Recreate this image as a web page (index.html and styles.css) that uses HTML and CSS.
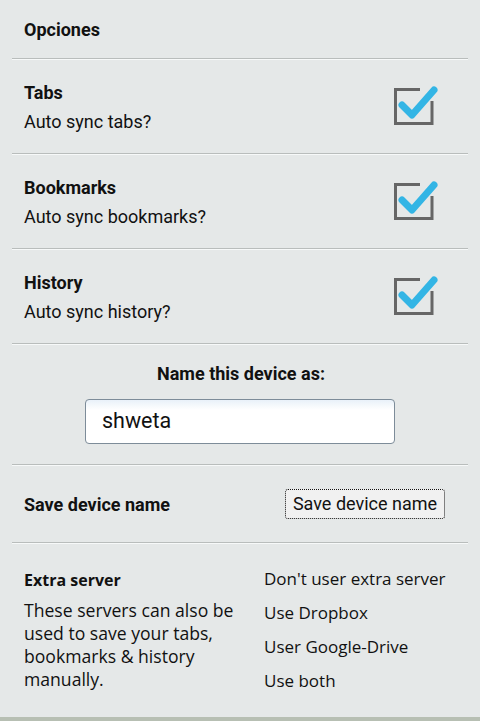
FILE: index.html
```html
<!DOCTYPE html>
<html>
<head>
<meta charset="utf-8">
<link rel="stylesheet" href="styles.css">
</head>
<body>
<div class="page">
  <div class="header">Opciones</div>
  <div class="divider"></div>

  <div class="row">
    <div class="texts">
      <div class="title">Tabs</div>
      <div class="sub">Auto sync tabs?</div>
    </div>
    <svg class="check" width="46" height="42" viewBox="0 0 46 42">
      <path d="M28 4.5 H3.5 V38.5 H40 V16" fill="none" stroke="#666" stroke-width="3"/>
      <path d="M10 20 L20 30 L42 5" fill="none" stroke="#33b5e5" stroke-width="7" stroke-linecap="round" stroke-linejoin="round"/>
    </svg>
  </div>
  <div class="divider"></div>

  <div class="row">
    <div class="texts">
      <div class="title">Bookmarks</div>
      <div class="sub">Auto sync bookmarks?</div>
    </div>
    <svg class="check" width="46" height="42" viewBox="0 0 46 42">
      <path d="M28 4.5 H3.5 V38.5 H40 V16" fill="none" stroke="#666" stroke-width="3"/>
      <path d="M10 20 L20 30 L42 5" fill="none" stroke="#33b5e5" stroke-width="7" stroke-linecap="round" stroke-linejoin="round"/>
    </svg>
  </div>
  <div class="divider"></div>

  <div class="row">
    <div class="texts">
      <div class="title">History</div>
      <div class="sub">Auto sync history?</div>
    </div>
    <svg class="check" width="46" height="42" viewBox="0 0 46 42">
      <path d="M28 4.5 H3.5 V38.5 H40 V16" fill="none" stroke="#666" stroke-width="3"/>
      <path d="M10 20 L20 30 L42 5" fill="none" stroke="#33b5e5" stroke-width="7" stroke-linecap="round" stroke-linejoin="round"/>
    </svg>
  </div>
  <div class="divider"></div>

  <div class="device">
    <div class="device-label">Name this device as:</div>
    <div class="input">shweta</div>
  </div>
  <div class="divider"></div>

  <div class="save-row">
    <div class="save-label">Save device name</div>
    <div class="button">Save device name</div>
  </div>
  <div class="divider"></div>

  <div class="extra">
    <div class="extra-left">
      <div class="extra-title">Extra server</div>
      <div class="extra-desc">These servers can also be used to save your tabs, bookmarks &amp; history manually.</div>
    </div>
    <div class="extra-right">
      <div class="opt">Don't user extra server</div>
      <div class="opt">Use Dropbox</div>
      <div class="opt">User Google-Drive</div>
      <div class="opt">Use both</div>
    </div>
  </div>
  <div class="bottom-band"></div>
</div>
</body>
</html>
```
FILE: styles.css
```css
html, body {
  margin: 0;
  padding: 0;
  background: #e5e8e8;
}
body {
  font-family: Roboto, "Liberation Sans", sans-serif;
  color: #111;
}
.page {
  width: 480px;
  height: 721px;
  display: flex;
  flex-direction: column;
  overflow: hidden;
}
.header {
  height: 58px;
  box-sizing: border-box;
  padding: 18px 0 0 24px;
  font-size: 18px;
  font-weight: bold;
  line-height: 24px;
}
.divider {
  height: 1px;
  margin: 0 12px;
  background: #b9bdbc;
  border-bottom: 1px solid #f7f9f9;
  flex: none;
}
.row {
  height: 93px;
  box-sizing: border-box;
  padding: 21px 0 0 24px;
  display: flex;
  justify-content: space-between;
  align-items: flex-start;
}
.title {
  font-size: 18px;
  font-weight: bold;
  line-height: 24px;
}
.sub {
  font-size: 18px;
  line-height: 24px;
  margin-top: 5px;
}
.check {
  margin-right: 42px;
  margin-top: 4px;
  flex: none;
}
.device {
  height: 119px;
  box-sizing: border-box;
  padding-top: 17px;
  display: flex;
  flex-direction: column;
  align-items: center;
}
.device-label {
  font-size: 18px;
  font-weight: bold;
  line-height: 24px;
  padding-left: 2px;
}
.input {
  margin-top: 13px;
  width: 310px;
  height: 45px;
  box-sizing: border-box;
  border: 1px solid #7d8c99;
  border-radius: 4px;
  background: linear-gradient(#e9f1f9, #ffffff 10px);
  font-size: 21.5px;
  line-height: 41px;
  padding-left: 16px;
  color: #111;
}
.save-row {
  height: 76px;
  box-sizing: border-box;
  padding: 0 35px 0 24px;
  display: flex;
  justify-content: space-between;
  align-items: center;
}
.save-label {
  font-size: 18px;
  font-weight: bold;
  padding-top: 1px;
}
.button {
  width: 160px;
  height: 30px;
  box-sizing: border-box;
  background: #f1f1f1;
  border: 1px dotted #111;
  border-radius: 3px;
  font-size: 18px;
  line-height: 27px;
  text-align: center;
  margin-top: 0px;
}
.extra {
  flex: 1;
  display: flex;
  padding: 24px 0 0 24px;
  font-family: "Open Sans", "DejaVu Sans", sans-serif;
}
.extra-left {
  width: 240px;
}
.extra-title {
  font-size: 16px;
  font-weight: bold;
  line-height: 24px;
}
.extra-desc {
  margin-top: 7px;
  font-size: 17.6px;
  line-height: 23px;
  width: 225px;
}
.extra-right {
  display: flex;
  flex-direction: column;
  gap: 10px;
  margin-top: -1px;
}
.opt {
  font-size: 17px;
  line-height: 24px;
}
.bottom-band {
  height: 4px;
  background: #b7bfb3;
  flex: none;
}
```
